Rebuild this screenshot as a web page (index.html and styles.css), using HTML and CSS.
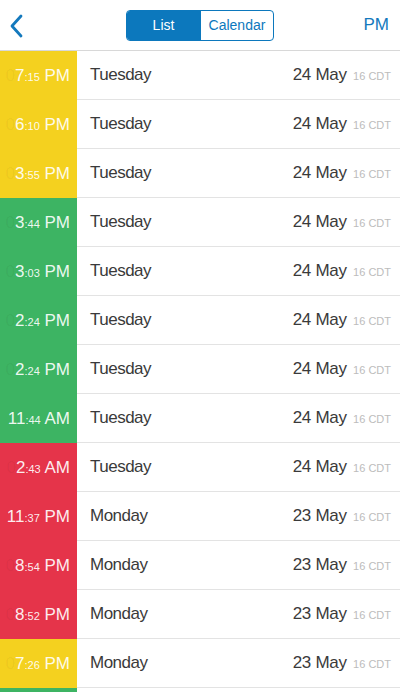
FILE: index.html
```html
<!DOCTYPE html>
<html lang="en">
  <head>
    <meta charset="UTF-8">
    <meta name="viewport" content="width=device-width, initial-scale=1.0">
    <title>Entries</title>
    <link rel="stylesheet" href="styles.css">
  </head>
  <body>
    <div class="header">
      <div class="back">
        <svg width="14" height="24" viewBox="0 0 14 24"><path d="M12 2 L3 12 L12 22" fill="none" stroke="#1479bd" stroke-width="2.8" stroke-linecap="round" stroke-linejoin="round"/></svg>
      </div>
      <div class="segment">
        <div class="seg active">List</div>
        <div class="seg">Calendar</div>
      </div>
      <div class="right">PM</div>
    </div>

    <ul class="list">
      <li class="row yellow"><div class="time"><span class="lead">0</span>7<small>:15</small> PM</div><div class="info"><span class="day">Tuesday</span><span class="date">24 May <small>16 CDT</small></span></div></li>
      <li class="row yellow"><div class="time"><span class="lead">0</span>6<small>:10</small> PM</div><div class="info"><span class="day">Tuesday</span><span class="date">24 May <small>16 CDT</small></span></div></li>
      <li class="row yellow"><div class="time"><span class="lead">0</span>3<small>:55</small> PM</div><div class="info"><span class="day">Tuesday</span><span class="date">24 May <small>16 CDT</small></span></div></li>
      <li class="row green"><div class="time"><span class="lead">0</span>3<small>:44</small> PM</div><div class="info"><span class="day">Tuesday</span><span class="date">24 May <small>16 CDT</small></span></div></li>
      <li class="row green"><div class="time"><span class="lead">0</span>3<small>:03</small> PM</div><div class="info"><span class="day">Tuesday</span><span class="date">24 May <small>16 CDT</small></span></div></li>
      <li class="row green"><div class="time"><span class="lead">0</span>2<small>:24</small> PM</div><div class="info"><span class="day">Tuesday</span><span class="date">24 May <small>16 CDT</small></span></div></li>
      <li class="row green"><div class="time"><span class="lead">0</span>2<small>:24</small> PM</div><div class="info"><span class="day">Tuesday</span><span class="date">24 May <small>16 CDT</small></span></div></li>
      <li class="row green"><div class="time">11<small>:44</small> AM</div><div class="info"><span class="day">Tuesday</span><span class="date">24 May <small>16 CDT</small></span></div></li>
      <li class="row red"><div class="time"><span class="lead">0</span>2<small>:43</small> AM</div><div class="info"><span class="day">Tuesday</span><span class="date">24 May <small>16 CDT</small></span></div></li>
      <li class="row red"><div class="time">11<small>:37</small> PM</div><div class="info"><span class="day">Monday</span><span class="date">23 May <small>16 CDT</small></span></div></li>
      <li class="row red"><div class="time"><span class="lead">0</span>8<small>:54</small> PM</div><div class="info"><span class="day">Monday</span><span class="date">23 May <small>16 CDT</small></span></div></li>
      <li class="row red"><div class="time"><span class="lead">0</span>8<small>:52</small> PM</div><div class="info"><span class="day">Monday</span><span class="date">23 May <small>16 CDT</small></span></div></li>
      <li class="row yellow"><div class="time"><span class="lead">0</span>7<small>:26</small> PM</div><div class="info"><span class="day">Monday</span><span class="date">23 May <small>16 CDT</small></span></div></li>
      <li class="row green"><div class="time"></div><div class="info"></div></li>
    </ul>
  </body>
</html>
```

FILE: styles.css
```css
* {
  padding: 0;
  margin: 0;
  box-sizing: border-box;
}

html,
body {
  height: 692px;
  overflow: hidden;
}

body {
  font-family: "Liberation Sans", Arial, sans-serif;
  background: #fff;
  color: #3a3a3a;
}

ul {
  list-style: none;
}

.header {
  height: 51px;
  display: flex;
  align-items: center;
  justify-content: space-between;
  padding: 0 11px 0 9px;
  border-bottom: 1px solid #d8d8d8;
}

.back {
  width: 40px;
  display: flex;
  align-items: center;
  padding-top: 1px;
}

.segment {
  display: flex;
  width: 148px;
  height: 31px;
  border: 1px solid #0c78bd;
  border-radius: 4px;
  overflow: hidden;
  margin-left: 36px;
}

.seg {
  display: flex;
  align-items: center;
  justify-content: center;
  font-size: 14px;
  color: #0c78bd;
}

.seg:first-child {
  width: 73px;
}

.seg:last-child {
  flex: 1;
  border-left: 1px solid #0c78bd;
}

.seg.active {
  background: #0c78bd;
  color: #fff;
}

.right {
  width: 74px;
  text-align: right;
  color: #1479bd;
  font-size: 17px;
}

.row {
  display: flex;
  height: 49px;
}

.time {
  width: 77px;
  padding-right: 7px;
  display: flex;
  align-items: center;
  justify-content: flex-end;
  white-space: pre;
  font-size: 17px;
  color: rgba(255, 255, 255, 0.92);
}

.time small {
  font-size: 11px;
  margin-top: 3px;
}

.time .lead {
  color: rgba(0, 0, 0, 0.05);
}

.yellow .time {
  background: #f4d11f;
}

.green .time {
  background: #3db463;
}

.red .time {
  background: #e5344a;
}

.info {
  flex: 1;
  display: flex;
  align-items: center;
  justify-content: space-between;
  padding: 0 9px 0 13px;
  border-bottom: 1px solid #e3e3e3;
  font-size: 17px;
}

.day {
  letter-spacing: -0.5px;
}

.date {
  letter-spacing: -0.3px;
}

.date small {
  font-size: 11px;
  letter-spacing: 0;
  margin-left: 2px;
  color: #bcbcbc;
}
```
